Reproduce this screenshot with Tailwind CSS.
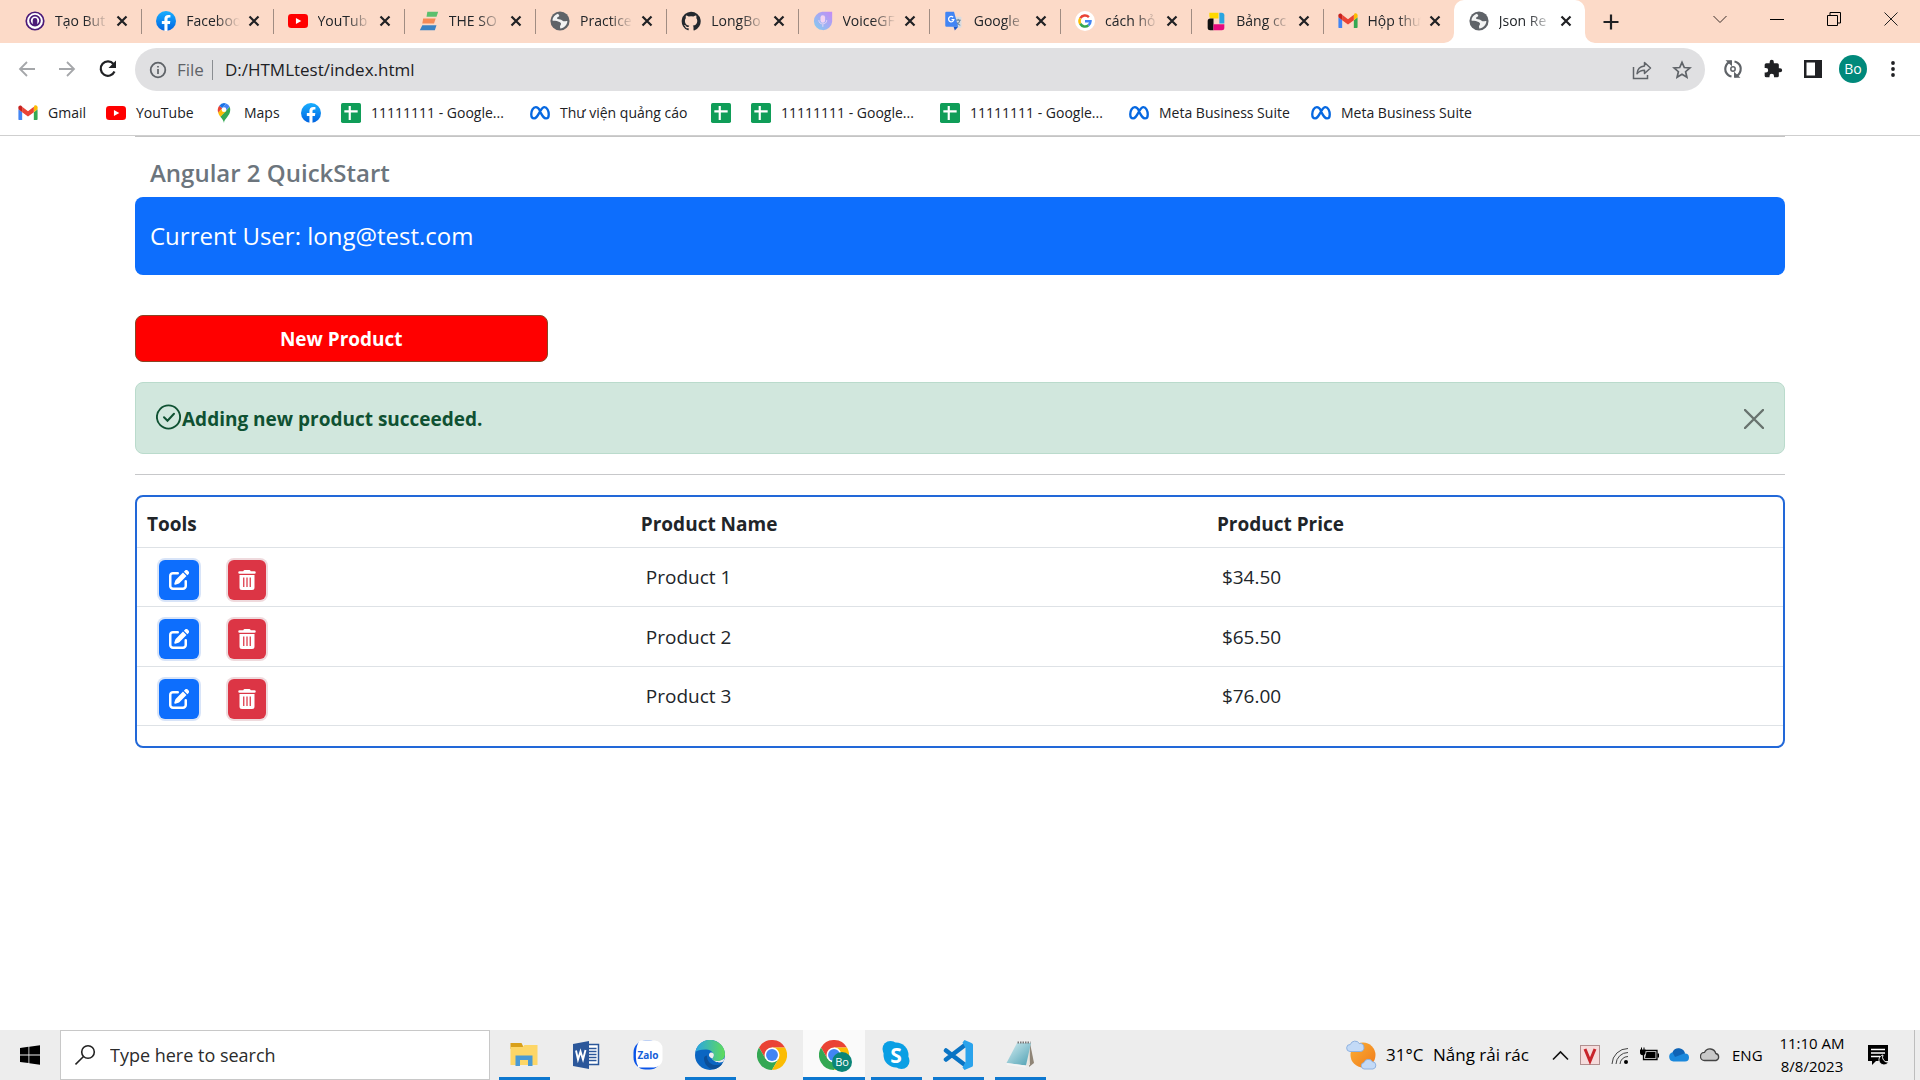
<!DOCTYPE html>
<html lang="en">
<head>
<meta charset="utf-8">
<title>Json Rest</title>
<script src="https://cdn.jsdelivr.net/npm/@tailwindcss/browser@4"></script>
</head>
<body class="min-h-screen flex flex-col bg-white text-[#212529] font-['Open_Sans','Noto_Sans',sans-serif] overflow-x-hidden">

<svg class="absolute size-0" aria-hidden="true">
  <defs>
    <linearGradient id="fbg" x1="0" y1="0" x2="0" y2="1"><stop offset="0" stop-color="#19afff"/><stop offset="1" stop-color="#0062e0"/></linearGradient>
    <linearGradient id="voiceg" x1="1" y1="0" x2="0" y2="1"><stop offset="0" stop-color="#c58af5"/><stop offset="1" stop-color="#7fd0f0"/></linearGradient>
    <linearGradient id="edgeg" x1="0" y1="0" x2="1" y2="0"><stop offset="0" stop-color="#2aa4e4"/><stop offset="1" stop-color="#5fdc5a"/></linearGradient>
    <linearGradient id="sung" x1="0" y1="0" x2="1" y2="1"><stop offset="0" stop-color="#fbb034"/><stop offset="1" stop-color="#f07a1c"/></linearGradient>
    <linearGradient id="padg" x1="0" y1="0" x2="1" y2="1"><stop offset="0" stop-color="#d5eef2"/><stop offset="1" stop-color="#4c9fb2"/></linearGradient>
  </defs>
  <symbol id="x" viewBox="0 0 12 12"><path d="M1.500 1.500l9 9M10.500 1.500l-9 9" stroke="#202124" stroke-width="2.200" fill="none"/></symbol>
  <symbol id="fb" viewBox="0 0 24 24"><circle cx="12" cy="12" r="12" fill="url(#fbg)"/><path fill="#fff" d="M16.700 15.500l.5-3.500h-3.400V9.800c0-1 .5-1.900 2-1.900h1.500v-3s-1.400-.2-2.700-.2c-2.700 0-4.500 1.700-4.500 4.700V12H7v3.500h3.100v8.400a12 12 0 0 0 3.700 0v-8.400z"/></symbol>
  <symbol id="yt" viewBox="0 0 24 24"><rect y="3.500" width="24" height="17" rx="4" fill="#f00"/><path d="M9.500 8.300v7.400l6.500-3.700z" fill="#fff"/></symbol>
  <symbol id="gm" viewBox="0 0 24 24"><path fill="#4285f4" d="M1 20.500h4V11L.5 7.500V19a1.500 1.500 0 0 0 .5 1.500z"/><path fill="#34a853" d="M19 20.500h3.500a1 1 0 0 0 1-1v-12L19 11z"/><path fill="#fbbc04" d="M19 5v6l4.500-3.500V5.200c0-2-2.300-3.100-3.900-2z"/><path fill="#ea4335" d="M5 11V4.500l7 5.300 7-5.300V11l-7 5.300z"/><path fill="#c5221f" d="M.5 5.200v2.300L5 11V4.500l-.8-.9C2.700 2.400.5 3.300.5 5.200z"/></symbol>
  <symbol id="globe" viewBox="0 0 24 24"><circle cx="12" cy="12" r="11.500" fill="#5f6368"/><path fill="#fff" opacity=".92" d="M3 11.500c0-4 3-7.300 6.500-8.300l1.300 1.600c.8 1-.2 2-1.300 2.300-1.500.5-1.200 2-.2 2.500l3 .7c1.500.3 2.500 1.500 3.800 1.900 1.500.4 2.300-.4 4.700-.2-.1 4.500-3.700 8.500-8.500 9l-.3-2.500c0-1.500 1.200-1.800 1.200-3.300 0-1.300-1.500-1.700-2.700-2.300-1.600-.8-3-1.300-4.500-1.300-1.200 0-2 .3-3 -.1z"/></symbol>
  <symbol id="sheet" viewBox="0 0 24 24"><rect x="0" y="0" width="24" height="24" rx="2" fill="#0f9d58"/><path d="M10.500 3.500v17M4 10h16" stroke="#fff" stroke-width="2.600"/></symbol>
  <symbol id="meta" viewBox="0 0 24 24"><path fill="none" stroke="#0668e1" stroke-width="2.800" stroke-linejoin="round" d="M12 9.300C10.500 6.500 8.900 5 7 5c-3.300 0-5.500 4.300-5.500 8.500 0 3 1.200 5 3.400 5 2.300 0 3.600-2 7.100-8.200C13.800 7 15.300 5 17.300 5c3.200 0 5.200 4.500 5.200 8.700 0 3-1.200 4.800-3.300 4.800-2.400 0-3.700-2-7.200-8.200"/></symbol>
  <symbol id="chrome" viewBox="0 0 48 48"><path fill="#ea4335" d="M3.200 12A24 24 0 0 1 44.800 12H24L13.600 30z"/><path fill="#34a853" d="M3.200 12A24 24 0 0 0 24 48L34.400 30 24 24 13.600 30z"/><path fill="#fbbc04" d="M44.800 12A24 24 0 0 1 24 48L34.400 30 31 14 24 12z"/><circle cx="24" cy="24" r="12" fill="#fff"/><circle cx="24" cy="24" r="9.500" fill="#4285f4"/></symbol>
  <symbol id="edit" viewBox="0 0 16 16"><path fill="currentColor" d="M15.500.9l-.4-.4a1.700 1.700 0 0 0-2.400 0l-.8.8 2.800 2.800.8-.8a1.700 1.700 0 0 0 0-2.400zM11.200 2L5.500 7.700c-.2.200-.4.500-.5.800L4.200 11c-.1.500.3.900.8.800l2.500-.8c.3-.1.600-.3.800-.5L14 4.800z"/><path d="M7 2.500H3.200A2.200 2.200 0 0 0 1 4.700v8A2.200 2.200 0 0 0 3.200 15h8a2.200 2.200 0 0 0 2.200-2.200V9" fill="none" stroke="currentColor" stroke-width="2" stroke-linecap="round"/></symbol>
  <symbol id="trash" viewBox="0 0 14 16"><path fill="currentColor" fill-rule="evenodd" d="M4.200.6A1 1 0 0 1 5.100 0h3.800a1 1 0 0 1 .9.600l.2.400h3a1 1 0 0 1 0 2H1a1 1 0 0 1 0-2h3zM1 4h12v10a2 2 0 0 1-2 2H3a2 2 0 0 1-2-2zm2.900 2v7.500h1V6zm2.600 0v7.500h1V6zm2.600 0v7.500h1V6z"/></symbol>
</svg>

<!-- Tab strip -->
<header class="shrink-0">
  <div class="flex h-[43px] bg-[#fcdac8] pl-[10px] text-[14px] leading-5">
    <nav class="grid grid-cols-12 w-[1575px] shrink" aria-label="Tabs">
      <div class="relative flex items-center pl-[15px] pr-[13px] pb-px min-w-0">
        <svg class="size-5 shrink-0" viewBox="0 0 24 24"><circle cx="12" cy="12" r="10.500" fill="#fff" stroke="#4b1a78" stroke-width="2"/><circle cx="12" cy="11.500" r="6" fill="none" stroke="#4b1a78" stroke-width="2"/><path d="M12 9v9M10 11a2 2 0 1 1 4 0v5h-4z" stroke="#4b1a78" stroke-width="1.500" fill="#4b1a78"/></svg>
        <a href="#" class="ml-[10px] flex-1 min-w-0 overflow-hidden whitespace-nowrap [mask-image:linear-gradient(to_right,black_55%,transparent)]">Tạo But</a>
        <button class="ml-2 shrink-0" aria-label="Close"><svg class="size-3"><use href="#x"/></svg></button>
        <span class="absolute -right-px top-[9px] h-[25px] w-px bg-[#a08c82]"></span>
      </div>
      <div class="relative flex items-center pl-[15px] pr-[13px] pb-px min-w-0">
        <svg class="size-5 shrink-0"><use href="#fb"/></svg>
        <a href="#" class="ml-[10px] flex-1 min-w-0 overflow-hidden whitespace-nowrap [mask-image:linear-gradient(to_right,black_55%,transparent)]">Faceboo</a>
        <button class="ml-2 shrink-0" aria-label="Close"><svg class="size-3"><use href="#x"/></svg></button>
        <span class="absolute -right-px top-[9px] h-[25px] w-px bg-[#a08c82]"></span>
      </div>
      <div class="relative flex items-center pl-[15px] pr-[13px] pb-px min-w-0">
        <svg class="size-5 shrink-0"><use href="#yt"/></svg>
        <a href="#" class="ml-[10px] flex-1 min-w-0 overflow-hidden whitespace-nowrap [mask-image:linear-gradient(to_right,black_55%,transparent)]">YouTub</a>
        <button class="ml-2 shrink-0" aria-label="Close"><svg class="size-3"><use href="#x"/></svg></button>
        <span class="absolute -right-px top-[9px] h-[25px] w-px bg-[#a08c82]"></span>
      </div>
      <div class="relative flex items-center pl-[15px] pr-[13px] pb-px min-w-0">
        <svg class="size-5 shrink-0" viewBox="0 0 24 24"><path fill="#5bbf6e" d="M10 1h13l-2 6H9z"/><path fill="#f58a57" d="M5 9h15l-2 6H4z"/><path fill="#3b82c4" d="M4 17h17l-2 6H1z"/></svg>
        <a href="#" class="ml-[10px] flex-1 min-w-0 overflow-hidden whitespace-nowrap [mask-image:linear-gradient(to_right,black_55%,transparent)]">THE SO</a>
        <button class="ml-2 shrink-0" aria-label="Close"><svg class="size-3"><use href="#x"/></svg></button>
        <span class="absolute -right-px top-[9px] h-[25px] w-px bg-[#a08c82]"></span>
      </div>
      <div class="relative flex items-center pl-[15px] pr-[13px] pb-px min-w-0">
        <svg class="size-5 shrink-0"><use href="#globe"/></svg>
        <a href="#" class="ml-[10px] flex-1 min-w-0 overflow-hidden whitespace-nowrap [mask-image:linear-gradient(to_right,black_55%,transparent)]">Practice</a>
        <button class="ml-2 shrink-0" aria-label="Close"><svg class="size-3"><use href="#x"/></svg></button>
        <span class="absolute -right-px top-[9px] h-[25px] w-px bg-[#a08c82]"></span>
      </div>
      <div class="relative flex items-center pl-[15px] pr-[13px] pb-px min-w-0">
        <svg class="size-5 shrink-0" viewBox="0 0 24 24"><path fill="#24292f" d="M12 .9a11.500 11.500 0 0 0-3.600 22.300c.6.100.8-.2.800-.5v-2c-3.200.7-3.900-1.500-3.900-1.500-.5-1.300-1.300-1.700-1.300-1.700-1-.7.1-.7.100-.7 1.200.1 1.800 1.200 1.800 1.200 1 1.800 2.700 1.300 3.400 1 .1-.8.4-1.300.7-1.600-2.600-.3-5.300-1.300-5.300-5.800 0-1.300.5-2.300 1.200-3.100-.1-.3-.5-1.500.1-3.100 0 0 1-.3 3.200 1.200a11 11 0 0 1 5.800 0c2.200-1.500 3.200-1.200 3.200-1.200.6 1.600.2 2.800.1 3.100.7.800 1.200 1.800 1.200 3.100 0 4.500-2.700 5.500-5.300 5.800.4.400.8 1.100.8 2.200v3.200c0 .3.200.6.800.5A11.500 11.500 0 0 0 12 .9z"/></svg>
        <a href="#" class="ml-[10px] flex-1 min-w-0 overflow-hidden whitespace-nowrap [mask-image:linear-gradient(to_right,black_55%,transparent)]">LongBo</a>
        <button class="ml-2 shrink-0" aria-label="Close"><svg class="size-3"><use href="#x"/></svg></button>
        <span class="absolute -right-px top-[9px] h-[25px] w-px bg-[#a08c82]"></span>
      </div>
      <div class="relative flex items-center pl-[15px] pr-[13px] pb-px min-w-0">
        <svg class="size-5 shrink-0" viewBox="0 0 24 24"><path fill="url(#voiceg)" d="M11 1h12v12A11 11 0 1 1 11 1z"/><rect x="9" y="5" width="5.500" height="9" rx="2.700" fill="#f3d3f2"/><path d="M7 11c0 6 9.500 6 9.500 0M11.800 16v3" fill="none" stroke="#e5d5f5" stroke-width="1.200"/></svg>
        <a href="#" class="ml-[10px] flex-1 min-w-0 overflow-hidden whitespace-nowrap [mask-image:linear-gradient(to_right,black_55%,transparent)]">VoiceGF</a>
        <button class="ml-2 shrink-0" aria-label="Close"><svg class="size-3"><use href="#x"/></svg></button>
        <span class="absolute -right-px top-[9px] h-[25px] w-px bg-[#a08c82]"></span>
      </div>
      <div class="relative flex items-center pl-[15px] pr-[13px] pb-px min-w-0">
        <svg class="size-5 shrink-0" viewBox="0 0 24 24"><rect x="9" y="7" width="12" height="13" rx="1" fill="#d9dce1"/><path d="M14 11h6M17 9.500V11M19 11c-.5 3-2.500 5-5 6M15 13c1 2 2.500 3.500 4.500 4" stroke="#5f7d95" stroke-width="1.200" fill="none"/><path fill="#4285f4" d="M3 1h9l5 18H3a1.500 1.500 0 0 1-1.500-1.500v-15A1.500 1.500 0 0 1 3 1z"/><path fill="#1a57c9" d="M11.500 19H17l-4 4.500z"/><path d="M11 7.500a3.200 3.200 0 1 0 .9 2.700H9" fill="none" stroke="#fff" stroke-width="1.500"/></svg>
        <a href="#" class="ml-[10px] flex-1 min-w-0 overflow-hidden whitespace-nowrap [mask-image:linear-gradient(to_right,black_55%,transparent)]">Google</a>
        <button class="ml-2 shrink-0" aria-label="Close"><svg class="size-3"><use href="#x"/></svg></button>
        <span class="absolute -right-px top-[9px] h-[25px] w-px bg-[#a08c82]"></span>
      </div>
      <div class="relative flex items-center pl-[15px] pr-[13px] pb-px min-w-0">
        <svg class="size-5 shrink-0" viewBox="0 0 24 24"><circle cx="12" cy="12" r="12" fill="#fff"/><g fill="none" stroke-width="3"><path stroke="#ea4335" d="M6.300 8.700A6.600 6.600 0 0 1 16.700 7.300"/><path stroke="#fbbc04" d="M6.300 15.300a6.600 6.600 0 0 1 0-6.600"/><path stroke="#34a853" d="M16.200 17.100a6.600 6.600 0 0 1-9.900-1.800"/><path stroke="#4285f4" d="M12 12.200h6.600a6.600 6.600 0 0 1-2.400 4.900"/></g></svg>
        <a href="#" class="ml-[10px] flex-1 min-w-0 overflow-hidden whitespace-nowrap [mask-image:linear-gradient(to_right,black_55%,transparent)]">cách hỏ</a>
        <button class="ml-2 shrink-0" aria-label="Close"><svg class="size-3"><use href="#x"/></svg></button>
        <span class="absolute -right-px top-[9px] h-[25px] w-px bg-[#a08c82]"></span>
      </div>
      <div class="relative flex items-center pl-[15px] pr-[13px] pb-px min-w-0">
        <svg class="size-5 shrink-0" viewBox="0 0 24 24"><path fill="#ffd900" d="M4 2h11v7H7a3 3 0 0 1-3-3z"/><path fill="#2aa5e0" d="M16 2h3a3 3 0 0 1 3 3v10h-6z"/><path fill="#111" d="M2 12a3 3 0 0 1 3-3h4v14H5a3 3 0 0 1-3-3z"/><path fill="#e6097e" d="M9 16h13v4a3 3 0 0 1-3 3H9z"/></svg>
        <a href="#" class="ml-[10px] flex-1 min-w-0 overflow-hidden whitespace-nowrap [mask-image:linear-gradient(to_right,black_55%,transparent)]">Bảng cc</a>
        <button class="ml-2 shrink-0" aria-label="Close"><svg class="size-3"><use href="#x"/></svg></button>
        <span class="absolute -right-px top-[9px] h-[25px] w-px bg-[#a08c82]"></span>
      </div>
      <div class="relative flex items-center pl-[15px] pr-[13px] pb-px min-w-0">
        <svg class="size-5 shrink-0"><use href="#gm"/></svg>
        <a href="#" class="ml-[10px] flex-1 min-w-0 overflow-hidden whitespace-nowrap [mask-image:linear-gradient(to_right,black_55%,transparent)]">Hộp thư</a>
        <button class="ml-2 shrink-0" aria-label="Close"><svg class="size-3"><use href="#x"/></svg></button>
      </div>
      <div class="relative flex items-center pl-[15px] pr-[13px] pb-px min-w-0 bg-white rounded-t-[10px]">
        <svg class="absolute bottom-0 -left-[10px] size-[10px]" viewBox="0 0 10 10"><path fill="#fff" d="M10 0v10H0A10 10 0 0 0 10 0z"/></svg>
        <svg class="absolute bottom-0 -right-[10px] size-[10px]" viewBox="0 0 10 10"><path fill="#fff" d="M0 0v10h10A10 10 0 0 1 0 0z"/></svg>
        <svg class="size-5 shrink-0"><use href="#globe"/></svg>
        <a href="#" class="ml-[10px] flex-1 min-w-0 overflow-hidden whitespace-nowrap [mask-image:linear-gradient(to_right,black_55%,transparent)]">Json Re</a>
        <button class="ml-2 shrink-0" aria-label="Close"><svg class="size-3"><use href="#x"/></svg></button>
      </div>
    </nav>
    <button class="ml-[18px] shrink-0" aria-label="New tab"><svg class="size-4" viewBox="0 0 16 16"><path d="M8 .5v15M.5 8h15" stroke="#202124" stroke-width="2.200"/></svg></button>
    <div class="ml-auto mr-px flex h-[37px] shrink-0" role="group" aria-label="Window">
      <button class="flex w-[57px] items-center justify-center" aria-label="Search tabs"><svg class="size-[14px]" viewBox="0 0 14 14"><path d="M.5 4l6.500 6.500L13.500 4" fill="none" stroke="#3b2f2a"/></svg></button>
      <button class="flex w-[57px] items-center justify-center" aria-label="Minimize"><svg class="size-[14px]" viewBox="0 0 14 14"><path d="M0 7.500h14" stroke="#000"/></svg></button>
      <button class="flex w-[57px] items-center justify-center" aria-label="Restore"><svg class="size-[14px]" viewBox="0 0 14 14"><path d="M.5 3.500h10v10H.500zM3 3.500v-3h10.500v10.500h-3" fill="none" stroke="#000"/></svg></button>
      <button class="flex w-[57px] items-center justify-center" aria-label="Close window"><svg class="size-[14px]" viewBox="0 0 14 14"><path d="M.5.5l13 13M13.500.5l-13 13" stroke="#222"/></svg></button>
    </div>
  </div>

  <!-- Toolbar -->
  <div class="flex items-center h-[53px] pl-[17px] pr-[17px]">
    <div class="flex w-[118px] items-center gap-5">
      <button aria-label="Back"><svg class="size-5" viewBox="0 0 20 20"><path d="M18 9H3M10 2l-7 7 7 7" fill="none" stroke="#a5a7aa" stroke-width="1.800"/></svg></button>
      <button aria-label="Forward"><svg class="size-5" viewBox="0 0 20 20"><path d="M2 9h15M10 2l7 7-7 7" fill="none" stroke="#a5a7aa" stroke-width="1.800"/></svg></button>
      <button aria-label="Reload"><svg class="size-5" viewBox="0 0 20 20"><path d="M17.500 11.500A7.200 7.200 0 1 1 16.500 4" fill="none" stroke="#202124" stroke-width="2.200"/><path d="M19 .5v7.500h-7.500z" fill="#202124"/></svg></button>
    </div>
    <div class="flex flex-1 items-center h-[43px] rounded-full bg-[#e0e0e2] pl-[14px] pr-[13px] text-[17px]">
      <svg class="size-[18px] shrink-0" viewBox="0 0 18 18"><circle cx="9" cy="9" r="7.300" fill="none" stroke="#5f6368" stroke-width="1.800"/><path d="M9 8v5M9 5v1.600" stroke="#5f6368" stroke-width="1.700"/></svg>
      <span class="ml-[10px] text-[#5f6368]">File</span>
      <span class="ml-2 h-5 w-px bg-[#8a8d91]"></span>
      <input class="ml-3 flex-1 min-w-0 bg-transparent outline-none text-[#202124]" aria-label="Address" value="D:/HTMLtest/index.html">
      <button aria-label="Share"><svg class="size-5" viewBox="0 0 20 20"><path d="M1.500 7v11.500h14V15" fill="none" stroke="#5f6368" stroke-width="1.500"/><path d="M12.500 2.500l6 5.500-6 5.500v-3.300c-3.500 0-5.500 1-7.500 3.500.3-4 3-7.200 7.500-7.700z" fill="none" stroke="#5f6368" stroke-width="1.500" stroke-linejoin="round"/></svg></button>
      <button class="ml-5" aria-label="Bookmark"><svg class="size-5" viewBox="0 0 20 20"><path d="M10 2.300l2.300 5.200 5.600.5-4.300 3.700 1.300 5.600L10 14.300l-4.900 3 1.300-5.600L2.100 8l5.600-.5z" fill="none" stroke="#5f6368" stroke-width="1.700"/></svg></button>
    </div>
    <div class="ml-[18px] flex items-center gap-5 pb-[2px]">
      <button aria-label="Sync"><svg class="size-5" viewBox="0 0 20 20"><path d="M8 2.500a7.700 7.700 0 0 0-3 13.300M12 17.500A7.700 7.700 0 0 0 15 4.200M11.500 2.500a7.600 7.600 0 0 1 3.500 1.700M8.500 17.500A7.600 7.600 0 0 1 5 15.800" fill="none" stroke="#5f6368" stroke-width="2.200"/><path d="M2.500 1.200h6.500v6zM17.500 18.800h-6.500v-6z" fill="#5f6368"/><circle cx="10" cy="10" r="2.200" fill="none" stroke="#5f6368" stroke-width="1.500"/></svg></button>
      <button aria-label="Extensions"><svg class="size-5" viewBox="0 0 24 24"><path fill="#202124" d="M20.500 11H19V7a2 2 0 0 0-2-2h-4V3.500a2.500 2.500 0 0 0-5 0V5H4a2 2 0 0 0-2 2v3.800h1.500a2.700 2.700 0 0 1 0 5.400H2V20a2 2 0 0 0 2 2h3.800v-1.500a2.700 2.700 0 0 1 5.400 0V22H17a2 2 0 0 0 2-2v-4h1.500a2.500 2.500 0 0 0 0-5z"/></svg></button>
      <button aria-label="Side panel"><svg class="size-5" viewBox="0 0 20 20"><path fill="#202124" fill-rule="evenodd" d="M1 1h18v18H1zm2.500 2.500v13H12v-13z"/></svg></button>
      <button class="-mx-1 flex size-7 items-center justify-center rounded-full bg-[#00897b] text-sm text-white" aria-label="Profile">Bo</button>
      <button aria-label="Menu"><svg class="size-5" viewBox="0 0 20 20"><g fill="#202124"><circle cx="10" cy="4" r="1.900"/><circle cx="10" cy="10" r="1.900"/><circle cx="10" cy="16" r="1.900"/></g></svg></button>
    </div>
  </div>

  <!-- Bookmarks -->
  <nav class="flex items-center h-[40px] pb-[6px] pl-[18px] border-b border-[#cfcfcf] text-[14px] leading-5 whitespace-nowrap text-[#202124]" aria-label="Bookmarks">
    <a href="#" class="flex w-[88px] items-center gap-[10px]"><svg class="size-5 shrink-0"><use href="#gm"/></svg>Gmail</a>
    <a href="#" class="flex w-[108px] items-center gap-[10px]"><svg class="size-5 shrink-0"><use href="#yt"/></svg>YouTube</a>
    <a href="#" class="flex w-[87px] items-center gap-[10px]"><svg class="size-5 shrink-0" viewBox="0 0 24 24"><path fill="#34a853" d="M12 24c0-5 7.500-8.500 7.500-16 0-1.200-.2-2.400-.7-3.500L7.500 16.500C9.500 18.500 11.300 20.500 12 24z"/><path fill="#fbbc04" d="M4.900 11.500L10 6.300l5 3-7.500 7.200c-1-1.400-2-3-2.600-5z"/><path fill="#ea4335" d="M6.300 3.200L10 6.300 4.900 11.500C4 8.500 4.500 5.500 6.300 3.200z"/><path fill="#1a73e8" d="M6.300 3.200A7.500 7.500 0 0 1 14.500.5L10 6.300z"/><path fill="#4285f4" d="M14.500.5a7.500 7.500 0 0 1 4.300 4L13.500 10 10 6.300z"/><circle cx="12" cy="8" r="2.800" fill="#fff"/></svg>Maps</a>
    <a href="#" class="flex w-[40px] items-center" aria-label="Facebook"><svg class="size-5 shrink-0"><use href="#fb"/></svg></a>
    <a href="#" class="flex w-[189px] items-center gap-[10px]"><svg class="size-5 shrink-0"><use href="#sheet"/></svg>11111111 - Google...</a>
    <a href="#" class="flex w-[181px] items-center gap-[10px]"><svg class="size-5 shrink-0"><use href="#meta"/></svg>Thư viện quảng cáo</a>
    <a href="#" class="flex w-[40px] items-center" aria-label="Sheets"><svg class="size-5 shrink-0"><use href="#sheet"/></svg></a>
    <a href="#" class="flex w-[189px] items-center gap-[10px]"><svg class="size-5 shrink-0"><use href="#sheet"/></svg>11111111 - Google...</a>
    <a href="#" class="flex w-[189px] items-center gap-[10px]"><svg class="size-5 shrink-0"><use href="#sheet"/></svg>11111111 - Google...</a>
    <a href="#" class="flex w-[182px] items-center gap-[10px]"><svg class="size-5 shrink-0"><use href="#meta"/></svg>Meta Business Suite</a>
    <a href="#" class="flex w-[182px] items-center gap-[10px]"><svg class="size-5 shrink-0"><use href="#meta"/></svg>Meta Business Suite</a>
  </nav>
</header>

<!-- Page -->
<main class="flex-1 mx-auto w-full max-w-[1650px] text-[19px] leading-[30px]">
  <section class="border-t border-[#c4c4c4]">
    <h1 class="px-[15px] pt-5 pb-2 text-[24px] leading-8 font-semibold text-[#6c757d]">Angular 2 QuickStart</h1>
    <p class="rounded-lg bg-[#0d6efd] px-[15px] py-5 text-[24px] leading-[38px] text-white">Current User: long@test.com</p>
  </section>
  <button class="mt-10 block h-[47px] w-1/4 rounded-lg border border-[#8a4423] bg-[#f00] font-bold text-white">New Product</button>
  <div role="alert" class="mt-5 flex h-[72px] items-center rounded-lg border border-[#badbcc] bg-[#d1e7dd] px-5 pt-px font-bold text-[#0f5132]">
    <svg class="mb-1 size-[26px] shrink-0" viewBox="0 0 26 26"><circle cx="12.500" cy="13" r="11.600" fill="none" stroke="currentColor" stroke-width="1.900"/><path d="M8 13.200l3.500 3.500 6.500-7" fill="none" stroke="currentColor" stroke-width="2" stroke-linecap="round"/></svg>
    <span>Adding new product succeeded.</span>
    <button class="ml-auto" aria-label="Dismiss"><svg class="size-5" viewBox="0 0 20 20"><path d="M1 1l18 18M19 1L1 19" stroke="#68736e" stroke-width="2.400" stroke-linecap="round"/></svg></button>
  </div>
  <hr class="my-5 border-[#c7c8ca]">
  <div class="rounded-lg border-2 border-[#2268d8] pb-5">
    <table class="w-full table-fixed border-collapse text-left">
      <thead>
        <tr class="h-[50px] border-b border-[#dee2e6]">
          <th class="w-[30%] px-[10px] pt-1 font-bold">Tools</th>
          <th class="w-[35%] px-[10px] pt-1 font-bold">Product Name</th>
          <th class="w-[35%] px-[10px] pt-1 font-bold">Product Price</th>
        </tr>
      </thead>
      <tbody>
        <tr class="h-[59px] border-b border-[#dee2e6]">
          <td class="px-[22px]">
            <div class="flex gap-[29px] pt-[6px]">
              <button aria-label="Edit Product 1" class="flex h-10 w-10 items-center justify-center rounded-md bg-[#0d6efd] text-white ring-2 ring-[#d8e4f8]"><svg class="size-5"><use href="#edit"/></svg></button>
              <button aria-label="Delete Product 1" class="flex h-10 w-[38px] items-center justify-center rounded-md bg-[#dc3545] text-white ring-2 ring-[#efdadd]"><svg class="h-5 w-[18px]"><use href="#trash"/></svg></button>
            </div>
          </td>
          <td class="px-[15px] pt-px">Product 1</td>
          <td class="px-[15px] pt-px">$34.50</td>
        </tr>
        <tr class="h-[60px] border-b border-[#dee2e6]">
          <td class="px-[22px]">
            <div class="flex gap-[29px] pt-[6px]">
              <button aria-label="Edit Product 2" class="flex h-10 w-10 items-center justify-center rounded-md bg-[#0d6efd] text-white ring-2 ring-[#d8e4f8]"><svg class="size-5"><use href="#edit"/></svg></button>
              <button aria-label="Delete Product 2" class="flex h-10 w-[38px] items-center justify-center rounded-md bg-[#dc3545] text-white ring-2 ring-[#efdadd]"><svg class="h-5 w-[18px]"><use href="#trash"/></svg></button>
            </div>
          </td>
          <td class="px-[15px] pt-px">Product 2</td>
          <td class="px-[15px] pt-px">$65.50</td>
        </tr>
        <tr class="h-[59px] border-b border-[#dee2e6]">
          <td class="px-[22px]">
            <div class="flex gap-[29px] pt-[6px]">
              <button aria-label="Edit Product 3" class="flex h-10 w-10 items-center justify-center rounded-md bg-[#0d6efd] text-white ring-2 ring-[#d8e4f8]"><svg class="size-5"><use href="#edit"/></svg></button>
              <button aria-label="Delete Product 3" class="flex h-10 w-[38px] items-center justify-center rounded-md bg-[#dc3545] text-white ring-2 ring-[#efdadd]"><svg class="h-5 w-[18px]"><use href="#trash"/></svg></button>
            </div>
          </td>
          <td class="px-[15px] pt-px">Product 3</td>
          <td class="px-[15px] pt-px">$76.00</td>
        </tr>
      </tbody>
    </table>
  </div>
</main>

<!-- Taskbar -->
<footer class="flex h-[50px] shrink-0 bg-[#ededed] whitespace-nowrap text-black">
  <button class="flex w-[60px] items-center justify-center" aria-label="Start"><svg class="size-5" viewBox="0 0 20 20"><path d="M0 3l8.500-1.200v7.700H0zM9.300 1.700L20 .2v9.300H9.300zM0 10.400h8.500v7.700L0 17zM9.300 10.400H20v9.400L9.300 18.300z"/></svg></button>
  <label class="flex w-[430px] items-center border border-[#c8c8c8] bg-white pl-[14px]">
    <svg class="size-[22px] shrink-0" viewBox="0 0 22 22"><circle cx="13" cy="8" r="6.300" fill="none" stroke="#222" stroke-width="1.600"/><path d="M8.500 12.500L.5 20.500" stroke="#222" stroke-width="1.600"/></svg>
    <input class="ml-[13px] flex-1 min-w-0 bg-transparent text-[18px] text-[#2b2b2b] outline-none placeholder:text-[#2b2b2b]" placeholder="Type here to search" aria-label="Search">
  </label>
  <nav class="ml-[3px] flex" aria-label="Apps">
    <button class="relative flex w-[62px] items-center justify-center" aria-label="File Explorer"><svg class="size-[30px]" viewBox="0 0 30 30"><path fill="#d9a019" d="M1.500 3h11l1.500 3v3h-12.500z"/><path fill="#fdd667" d="M1.500 7h12l2-2h13v20h-27z"/><path fill="#4a9ad4" d="M6.500 26v-10.500h17V26h-4.500v-6h-8v6z"/></svg><span class="absolute bottom-0 h-[3px] w-[51px] bg-[#0d78d0]"></span></button>
    <button class="relative flex w-[62px] items-center justify-center" aria-label="Word"><svg class="size-[30px]" viewBox="0 0 30 30"><path fill="#fff" stroke="#2b579a" stroke-width="1.500" d="M15 4.500h12.500v20H15z"/><path d="M17 8.500h8.500M17 11.500h8.500M17 14.500h8.500M17 17.500h8.500M17 20.500h8.500" stroke="#2b579a" stroke-width="1.500"/><path fill="#2b579a" d="M2 4l16-3v28L2 26z"/><path d="M5 10.500l2 9 2.500-8 2.500 8 2.500-9.500" fill="none" stroke="#fff" stroke-width="1.900"/></svg></button>
    <button class="relative flex w-[62px] items-center justify-center" aria-label="Zalo"><span class="relative flex size-[30px] items-center justify-center"><svg class="absolute inset-0 size-[30px]" viewBox="0 0 30 30"><rect x=".5" y=".5" width="28" height="29" rx="12" fill="#0a54e8"/><path fill="#fff" d="M8 .5h14a8 8 0 0 1 7.500 8V20a8.500 8.500 0 0 1-8.500 7.500H8c-1.500 0-2.300.3-3.500.2.800-1.300.5-2-.2-3.200C2.500 21 2 8 5.500 2.500 6 1.300 7 .5 8 .5z"/></svg><span class="relative text-[10px] font-bold text-[#1660d8]">Zalo</span></span></button>
    <button class="relative flex w-[62px] items-center justify-center" aria-label="Edge"><svg class="size-[30px]" viewBox="0 0 30 30"><circle cx="15" cy="15" r="15" fill="#0b66c2"/><path fill="url(#edgeg)" d="M.3 12A15 15 0 0 1 30 14c0 4.500-3.500 7-8 7-3 0-5-1.200-4.500-2.500 2-2 1.500-8.500-6-9C6 9.300 2 10.500.3 12z"/><path fill="#0c4f98" d="M9 18c0 6 4 11 10.500 11.300a15 15 0 0 0 8-5.800c-8 4-16 0-15.500-8-2 .3-3 1.500-3 2.500z"/><path fill="#ededed" d="M30 16.500c-.8 2.800-4 4.500-8 4.500-3.500 0-5-1.300-4.500-2.500-.7 0-4.700-2-3.300-4.600.7-1.500 3-1.800 4.200-.3.900 1.200.5 3-.9 4.900.5 3.500 7 5 11 3z"/></svg><span class="absolute bottom-0 h-[3px] w-[51px] bg-[#0d78d0]"></span></button>
    <button class="relative flex w-[62px] items-center justify-center" aria-label="Chrome"><svg class="size-[30px]"><use href="#chrome"/></svg></button>
    <button class="relative flex w-[62px] items-center justify-center bg-[#fafafa]" aria-label="Chrome, Bo"><svg class="size-[30px]"><use href="#chrome"/></svg><span class="absolute right-[13px] bottom-[8px] flex size-5 items-center justify-center rounded-full bg-[#0a8578] text-[11px] text-white">Bo</span><span class="absolute inset-x-0 bottom-0 h-[3px] bg-[#0d78d0]"></span></button>
    <button class="relative flex w-[62px] items-center justify-center" aria-label="Skype"><span class="relative flex size-[30px] items-center justify-center"><svg class="absolute inset-0 size-[30px]" viewBox="0 0 30 30"><g fill="#0a9fe4"><circle cx="15" cy="15" r="12.500"/><circle cx="9.500" cy="9" r="8"/><circle cx="20.500" cy="21" r="8"/></g></svg><span class="relative text-[21px] leading-none font-bold text-white">S</span></span><span class="absolute bottom-0 h-[3px] w-[51px] bg-[#0d78d0]"></span></button>
    <button class="relative flex w-[62px] items-center justify-center" aria-label="Visual Studio Code"><svg class="size-[30px]" viewBox="0 0 30 30"><path d="M3 10.500L22 25M3 19.500L22 5" stroke="#0a74c4" stroke-width="4.500" stroke-linecap="round"/><path fill="#2aa3ec" d="M21.500 0l7 3a2 2 0 0 1 1.500 2v20a2 2 0 0 1-1.500 2l-7 3-2-2.500L22.500 22V8l-3-5.500z"/></svg><span class="absolute bottom-0 h-[3px] w-[51px] bg-[#0d78d0]"></span></button>
    <button class="relative flex w-[62px] items-center justify-center" aria-label="Notepad"><svg class="size-[30px]" viewBox="0 0 30 30"><path fill="#8f8577" d="M25 3l4 20-5 4z"/><path fill="#e8e4dc" d="M24 4l1 21-3 1z"/><path fill="url(#padg)" d="M12 3h14l-5 22.500L1.500 23z"/><path fill="#f4f4f4" d="M1.500 23L21 25.500l-.5 2L2 25z"/><path d="M12.500 2.500h13" stroke="#777" stroke-width="1.800" stroke-dasharray="1.500 1"/></svg><span class="absolute bottom-0 h-[3px] w-[51px] bg-[#0d78d0]"></span></button>
  </nav>
  <div class="ml-auto flex items-center pr-[5px]">
    <a href="#" class="flex items-center text-[17px]">
      <svg class="size-[31px] shrink-0" viewBox="0 0 31 31"><circle cx="17" cy="15" r="12.500" fill="url(#sung)"/><path fill="#c3daf7" stroke="#8fb2e0" d="M4 11.500a3.500 3.500 0 0 1 .3-7 5 5 0 0 1 9-1 4 4 0 0 1 1.200 8z"/><path fill="#c3daf7" stroke="#8fb2e0" d="M18 29a3.300 3.300 0 0 1 0-6.500 4.500 4.500 0 0 1 8.300-.8A3.700 3.700 0 0 1 27 29z"/></svg>
      <span class="ml-[9px] w-[47px]">31°C</span><span class="w-[107px]">Nắng rải rác</span>
    </a>
    <div class="ml-[12px] flex items-center gap-[11px]">
      <svg class="size-[17px]" viewBox="0 0 17 17"><path d="M1 12.500L8.500 5l7.500 7.500" fill="none" stroke="#111" stroke-width="1.600"/></svg>
      <svg class="size-5" viewBox="0 0 20 20"><rect x=".5" y=".5" width="19" height="19" fill="#f5dcdc" stroke="#b09090"/><path d="M5 4l5 12L15 4" fill="none" stroke="#c8242b" stroke-width="3"/></svg>
      <svg class="size-5" viewBox="0 0 20 20"><g fill="none" stroke="#444" stroke-width="1"><path d="M1 19A16 16 0 0 1 17 3.500"/><path d="M5 19A12 12 0 0 1 17 7.500"/><path d="M9 19a8 8 0 0 1 8-7.500"/></g><circle cx="15" cy="17" r="2"/></svg>
      <svg class="-ml-[3px] size-5" viewBox="0 0 20 20"><path fill="none" stroke="#000" stroke-width="1.300" d="M6 5.500h12v9H4.500V10"/><path d="M7.500 7h9v6H6zM18.500 8.500H20v4h-1.500zM1 4.500h5.500v3a2.700 2.700 0 0 1-5.500 0zM2 2.500h1v2H2zM4.500 2.500h1v2h-1z"/></svg>
      <svg class="-ml-px size-5" viewBox="0 0 20 20"><path fill="#1a88dc" d="M4.500 16.500a4.700 4.700 0 0 1-.5-9.300 6.500 6.500 0 0 1 12 1.300 4 4 0 0 1 0 8z"/><path fill="#0f63b5" d="M3.500 7.300A6.500 6.500 0 0 1 15.800 8.200L6 12z"/></svg>
      <svg class="size-5" viewBox="0 0 20 20"><path fill="#c9c9c9" stroke="#444" stroke-width="1.300" d="M4.500 15.500a4.100 4.100 0 0 1 .1-8.200 6 6 0 0 1 11.200 1.200 3.600 3.600 0 0 1 .2 7z"/></svg>
    </div>
    <span class="ml-3 w-[45px] text-[15px]">ENG</span>
    <div class="w-[70px] text-center text-[15px] leading-[23px]"><div>11:10 AM</div><div>8/8/2023</div></div>
    <button class="ml-5" aria-label="Notifications"><svg class="size-[22px]" viewBox="0 0 22 22"><path d="M1 1h20v16H9l-4 4v-4H1z"/><path d="M4 5.500h14M4 9h14M4 12.500h9" stroke="#fff" stroke-width="1.300"/><path d="M16 11a5 5 0 1 0 5.500 7A5 5 0 0 1 16 11z" stroke="#ededed"/></svg></button>
    <span class="ml-[25px] h-[50px] w-px bg-[#bdbdbd]"></span>
  </div>
</footer>
</body>
</html>
